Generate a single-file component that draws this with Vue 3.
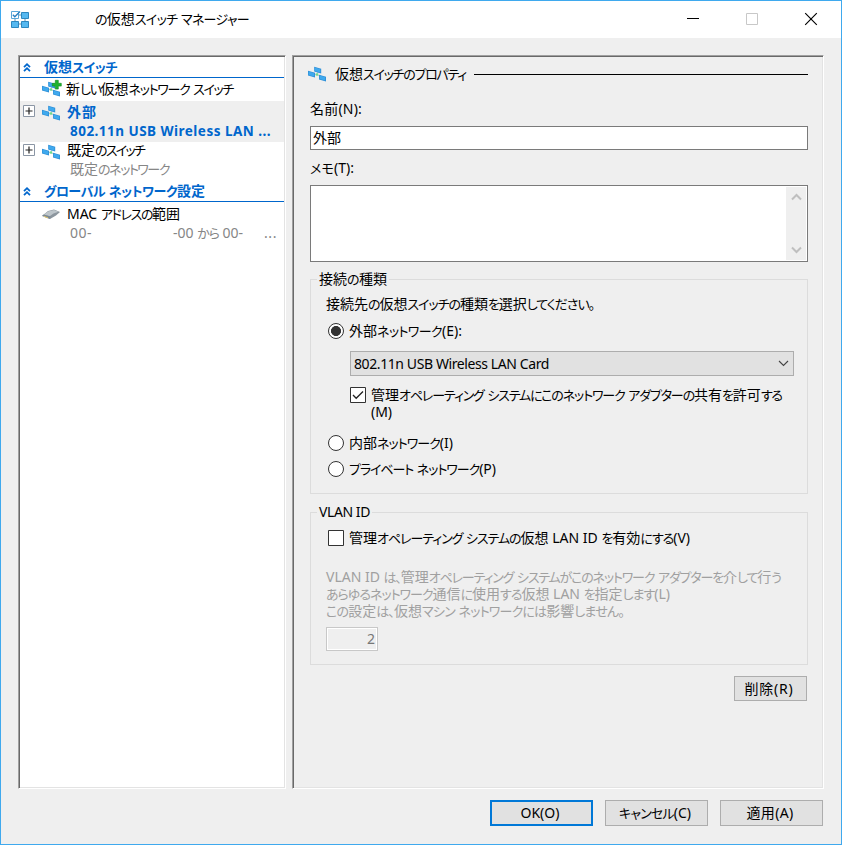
<script setup>
import { defineComponent, h, onMounted, ref } from 'vue'

const KANA = /([\u3040-\u30ff\u3001\u3002]+)/

// A single line of text set to a given advance width: kana are set tighter than kanji and Latin.
const Fit = defineComponent({
  props: { text: String, w: Number },
  setup(props) {
    const el = ref(null)
    const gap = ref(0)
    const runs = props.text.split(KANA).filter(Boolean)
    const hasKana = KANA.test(props.text)
    onMounted(() => {
      const natural = el.value.getBoundingClientRect().width
      const count = runs.filter(r => !hasKana || KANA.test(r)).join('').length
      gap.value = (props.w - natural) / count
    })
    return () => h('span', { class: 'fit', ref: el },
      runs.map(r => {
        const kana = KANA.test(r)
        return h('span', {
          class: kana ? 'kana' : 'plain',
          style: { letterSpacing: (kana || !hasKana ? gap.value : 0) + 'px' }
        }, r)
      }))
  }
})

const SwitchIcon = defineComponent({
  props: { add: Boolean },
  setup(props) {
    const screen = (x, y) => h('g', { transform: `translate(${x} ${y})` }, [
      h('path', { d: 'M0 0 7 2V6.8L0 4.8Z', fill: '#2f8fd6' }),
      h('path', { d: 'M.6 .8 6.2 2.5V5.8L.6 4.2Z', fill: '#3fa9ee' })
    ])
    return () => h('svg', { class: 'switch', viewBox: '0 0 18 18', width: 18, height: 18 }, [
      h('path', { d: 'M6 8 13 10M9 8 10.5 5', stroke: '#b5c4cd', 'stroke-width': 1 }),
      screen(6.2, .8), screen(0, 4.8), screen(11, 8.8),
      h('path', { d: 'M7.8 7.4h2.4v2.2H7.8z', fill: '#6bdc8a' }),
      props.add ? h('path', { d: 'M13.3 -.7h3v3h3v2.8h-3v3h-3v-3h-3V2.3h3z', fill: '#1fb32e', stroke: '#0f8a1c', 'stroke-width': .6 }) : null
    ])
  }
})
</script>

<template>
  <div class="window">
    <header class="titlebar">
      <svg class="app-icon" width="18" height="17" viewBox="0 0 18 17">
        <path d="M8 4h3M8 13h3M14 8v2M4 8v2" stroke="#5e91b2" />
        <path d="M.5.5h7v7h-7z" fill="#fff" stroke="#5aa7d8" />
        <path d="m1.8 3.8 2 2L9 .5" fill="none" stroke="#2a7fc0" stroke-width="1.3" />
        <path d="M10.5 1.5h7v6h-7zM.5 10.5h7v6h-7zM10.5 10.5h7v6h-7z" fill="#55b8f0" stroke="#2c87bf" />
      </svg>
      <Fit class="title" text="の仮想スイッチ マネージャー" :w="154" />
      <div class="caption">
        <svg width="12" height="12" viewBox="0 0 12 12"><path d="M0 4.5h12" stroke="#000" /></svg>
        <svg width="12" height="12" viewBox="0 0 12 12"><path d="M.5-.5h11v11H.5z" fill="none" stroke="#c8c8c8" /></svg>
        <svg width="12" height="12" viewBox="0 0 12 12"><path d="M.2-.8 11.8 10.8M11.8-.8.2 10.8" stroke="#000" stroke-width="1.15" /></svg>
      </div>
    </header>

    <main class="panes">
      <nav class="pane tree">
        <div class="section">
          <svg width="8" height="9" viewBox="0 0 8 9"><path d="m1 4.2 3-3 3 3M1 8.2l3-3 3 3" fill="none" stroke="#0066cc" stroke-width="1.8" /></svg>
          <Fit text="仮想スイッチ" :w="73" />
        </div>
        <div class="node new">
          <SwitchIcon add />
          <Fit class="first" text="新しい仮想ネットワーク スイッチ" :w="167" />
        </div>
        <div class="node selected">
          <svg class="expander" width="12" height="12" viewBox="0 0 12 12"><path d="M.5.5h11v11H.5z" fill="#fff" stroke="#8b96a5" /><path d="M2.5 6h7M6 2.5v7" stroke="#222" stroke-width="1.2" /></svg>
          <SwitchIcon />
          <div class="lines">
            <Fit text="外部" :w="30" />
            <Fit class="sub" text="802.11n USB Wireless LAN ..." :w="201" />
          </div>
        </div>
        <div class="node default">
          <svg class="expander" width="12" height="12" viewBox="0 0 12 12"><path d="M.5.5h11v11H.5z" fill="#fff" stroke="#8b96a5" /><path d="M2.5 6h7M6 2.5v7" stroke="#222" stroke-width="1.2" /></svg>
          <SwitchIcon />
          <div class="lines">
            <Fit text="既定のスイッチ" :w="77" />
            <Fit class="sub" text="既定のネットワーク" :w="99" />
          </div>
        </div>
        <div class="section">
          <svg width="8" height="9" viewBox="0 0 8 9"><path d="m1 4.2 3-3 3 3M1 8.2l3-3 3 3" fill="none" stroke="#0066cc" stroke-width="1.8" /></svg>
          <Fit text="グローバル ネットワーク設定" :w="161" />
        </div>
        <div class="node mac">
          <svg class="plug" width="18" height="12" viewBox="0 0 18 12">
            <path d="M0 7 6 2l6-1.5L18 3l-4 3.5L8 10z" fill="#8c969e" />
            <path d="m1 6.2 5-3.7 6-1.4 4.5 1.7-5 1.7L8 7z" fill="#bdc5ca" />
            <path d="m0 6.5 2-1L8.5 7.5 8 10z" fill="#7c8a94" />
            <path d="m2 7.4 4 1.5" stroke="#e0c46b" />
          </svg>
          <div class="lines">
            <Fit text="MAC アドレスの範囲" :w="113" />
            <div class="sub range">
              <Fit text="00-" :w="22" />
              <Fit class="to" text="-00 から 00-" :w="70" />
              <Fit text="..." :w="13" />
            </div>
          </div>
        </div>
      </nav>

      <section class="pane props">
        <div class="heading">
          <SwitchIcon />
          <Fit text="仮想スイッチのプロパティ" :w="131" />
          <i class="rule"></i>
        </div>
        <label class="caption-label name"><Fit text="名前(N):" :w="52" /></label>
        <div class="input"><Fit text="外部" :w="28" /></div>
        <label class="caption-label memo"><Fit text="メモ(T):" :w="44" /></label>
        <div class="textarea">
          <div class="scroll">
            <svg width="9" height="7" viewBox="0 0 9 7"><path d="M0 5.5 4.5 1 9 5.5" fill="none" stroke="#bfbfbf" stroke-width="2" /></svg>
            <svg width="9" height="7" viewBox="0 0 9 7"><path d="M0 1.5 4.5 6 9 1.5" fill="none" stroke="#bfbfbf" stroke-width="2" /></svg>
          </div>
        </div>

        <fieldset class="kind">
          <legend><Fit text="接続の種類" :w="68" /></legend>
          <div class="line"><Fit text="接続先の仮想スイッチの種類を選択してください。" :w="268" /></div>
          <div class="option external"><i class="radio on"></i><Fit text="外部ネットワーク(E):" :w="113" /></div>
          <div class="select">
            <Fit text="802.11n USB Wireless LAN Card" :w="195" />
            <svg width="11" height="7" viewBox="0 0 11 7"><path d="M1 1 5.5 5.5 10 1" fill="none" stroke="#444" stroke-width="1.1" /></svg>
          </div>
          <div class="option share">
            <svg class="check" width="16" height="16" viewBox="0 0 16 16"><path d="M.5.5h15v15H.5z" fill="#fff" stroke="#333" /><path d="m3 8 3.2 3.3L13 4.5" fill="none" stroke="#222" stroke-width="1.3" /></svg>
            <div class="stack">
              <Fit text="管理オペレーティング システムにこのネットワーク アダプターの共有を許可する" :w="411" />
              <Fit text="(M)" :w="21" />
            </div>
          </div>
          <div class="option internal"><i class="radio"></i><Fit text="内部ネットワーク(I)" :w="104" /></div>
          <div class="option private"><i class="radio"></i><Fit text="プライベート ネットワーク(P)" :w="147" /></div>
        </fieldset>

        <fieldset class="vlan">
          <legend><Fit text="VLAN ID" :w="51" /></legend>
          <div class="option enable">
            <svg class="check" width="16" height="16" viewBox="0 0 16 16"><path d="M.5.5h15v15H.5z" fill="#fff" stroke="#333" /></svg>
            <Fit text="管理オペレーティング システムの仮想 LAN ID を有効にする(V)" :w="341" />
          </div>
          <div class="stack hint">
            <Fit text="VLAN ID は、管理オペレーティング システムがこのネットワーク アダプターを介して行う" :w="455" />
            <Fit text="あらゆるネットワーク通信に使用する仮想 LAN を指定します(L)" :w="344" />
            <Fit text="この設定は、仮想マシン ネットワークには影響しません。" :w="298" />
          </div>
          <div class="number">2</div>
        </fieldset>

        <button class="btn remove"><Fit text="削除(R)" :w="49" /></button>
      </section>
    </main>

    <footer class="actions">
      <button class="btn primary"><Fit text="OK(O)" :w="39" /></button>
      <button class="btn"><Fit text="キャンセル(C)" :w="72" /></button>
      <button class="btn"><Fit text="適用(A)" :w="47" /></button>
    </footer>
  </div>
</template>

<style>
.fit {
  display: inline-block;
  flex: none;
  width: max-content;
  white-space: pre;
}
.fit .kana {
  font-feature-settings: "palt";
  font-size: 13px;
}
</style>

<style scoped>
.window {
  box-sizing: border-box;
  width: 842px;
  height: 845px;
  border: 1px solid #3fa9ee;
  background: #efefef;
  color: #000;
  font: 14px/18px "Noto Sans", "Noto Sans CJK JP", sans-serif;
  display: flex;
  flex-direction: column;
}
svg { display: block; flex: none; overflow: visible; }
.titlebar {
  box-sizing: border-box;
  height: 37px;
  flex: none;
  background: #fff;
  display: flex;
  align-items: center;
  padding: 0 24px 1px 10px;
}
.app-icon { margin-right: 66px; }
.caption { margin-left: auto; display: flex; gap: 47px; padding-top: 1px; }
.panes {
  display: flex;
  gap: 6px;
  height: 734px;
  padding: 17px 0 0 17px;
  flex: none;
}
.pane {
  box-sizing: border-box;
  flex: none;
  border: 1px solid;
  border-color: #a0a0a0 #fff #fff #a0a0a0;
  box-shadow: inset 1px 1px #696969, inset -1px -1px #e3e3e3;
  padding: 1px;
}
.tree { width: 268px; background: #fff; }
.section {
  box-sizing: border-box;
  height: 21px;
  border-bottom: 1px solid #0066cc;
  display: flex;
  align-items: center;
  gap: 13px;
  padding-left: 3px;
  color: #0066cc;
  font-weight: 700;
}
.node { position: relative; display: flex; box-sizing: border-box; padding-left: 22px; }
.node .switch { margin: 1px 7px 0 0; }
.new { height: 23px; padding-top: 2px; }
.new .first { margin-left: -1px; }
.selected { height: 41px; background: #efefef; color: #0066cc; font-weight: 700; padding-top: 2px; }
.default { height: 39px; }
.selected .switch, .default .switch { margin-top: 2px; }
.expander { position: absolute; left: 3px; top: 4px; }
.default .expander { top: 2px; }
.lines { display: flex; flex-direction: column; gap: 1px; align-items: flex-start; }
.sub { margin-left: 3px; }
.selected .sub { font-size: 13.5px; }
.default .lines { margin-top: -1px; }
.default .sub, .mac .sub { color: #868686; }
.mac { padding-top: 3px; }
.plug { margin: 4px 7px 0 0; }
.range { display: flex; width: 206px; }
.to { margin: 0 21px 0 81px; }

.props { width: 532px; padding: 9px 15px 0 17px; display: flex; flex-direction: column; }
.heading { display: flex; height: 18px; align-items: center; }
.heading .switch { margin: 2px 9px 0 -2px; }
.rule { flex: 1; height: 1px; background: #000; margin-left: 8px; }
.caption-label { height: 18px; }
.name { margin: 17px 0 8px; }
.memo { margin: 9px 0 8px; }
.input, .textarea { box-sizing: border-box; border: 1px solid #7a7a7a; background: #fff; flex: none; }
.input { height: 24px; padding: 2px; }
.textarea { height: 77px; padding: 1px; display: flex; justify-content: flex-end; }
.scroll {
  box-sizing: border-box;
  width: 20px;
  background: #efefef;
  display: flex;
  flex-direction: column;
  justify-content: space-between;
  align-items: center;
  padding: 7px 0;
}
fieldset {
  box-sizing: border-box;
  min-width: 0;
  margin: 0;
  padding: 0 0 0 15px;
  border: 1px solid #dcdcdc;
  flex: none;
}
legend { height: 18px; margin-left: -9px; padding: 0 2px; }
.kind { height: 224px; margin-top: 8px; }
.vlan { height: 162px; margin-top: 9px; }
.line { height: 18px; margin-top: 7px; }
.option { display: flex; align-items: center; height: 18px; gap: 5px; padding-left: 2px; }
.radio {
  box-sizing: border-box;
  width: 16px;
  height: 16px;
  flex: none;
  border: 1px solid #333;
  border-radius: 50%;
  background: #fff;
}
.radio.on { background: radial-gradient(circle, #333 4.7px, #fff 5.3px); }
.external { margin-top: 9px; }
.select {
  box-sizing: border-box;
  width: 444px;
  height: 25px;
  margin: 11px 0 0 24px;
  border: 1px solid #adadad;
  background: #e1e1e1;
  display: flex;
  align-items: center;
  justify-content: space-between;
  padding: 0 4px 0 3px;
}
.share { height: 34px; margin: 11px 0 0 22px; align-items: flex-start; }
.stack { display: flex; flex-direction: column; align-items: flex-start; }
.stack .fit { height: 17px; line-height: 17px; }
.share .stack { margin-top: -1px; }
.internal { margin-top: 13px; }
.private { margin-top: 8px; }
.enable { margin-top: 8px; }
.hint { margin-top: 21px; color: #a0a0a0; }
.number {
  box-sizing: border-box;
  width: 52px;
  height: 24px;
  margin-top: 8px;
  border: 1px solid #c8c8c8;
  box-shadow: inset 0 0 0 1px #fff;
  padding: 2px 2px;
  text-align: right;
  color: #777;
}
.btn {
  box-sizing: border-box;
  width: 103px;
  height: 26px;
  margin: 0;
  padding: 0 3px 0 0;
  border: 1px solid #adadad;
  background: #e1e1e1;
  color: #000;
  font: inherit;
  display: flex;
  align-items: center;
  justify-content: center;
}
.remove { width: 73px; height: 25px; margin: 11px 1px 0 0; align-self: flex-end; flex: none; }
.primary { border: 2px solid #0078d7; }
.actions { display: flex; justify-content: flex-end; gap: 12px; padding: 11px 18px 0 0; }
</style>
